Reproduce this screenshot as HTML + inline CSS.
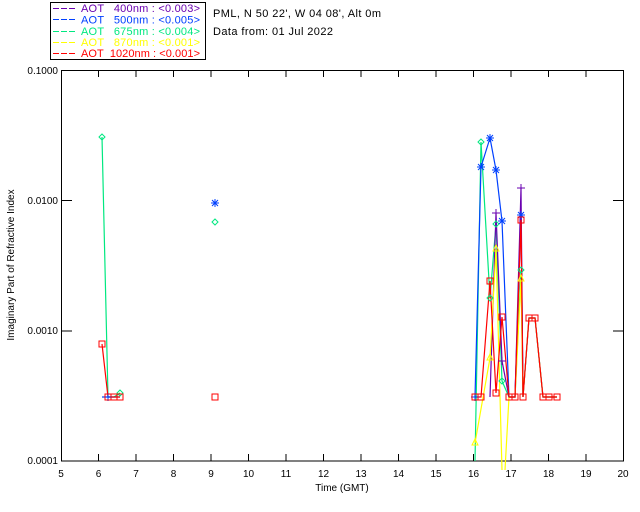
<!DOCTYPE html>
<html><head><meta charset="utf-8"><style>
html,body{margin:0;padding:0;background:#fff;}
svg{display:block;font-family:"Liberation Sans",sans-serif;}
</style></head><body>
<svg width="640" height="512" viewBox="0 0 640 512" xmlns="http://www.w3.org/2000/svg">
<rect width="640" height="512" fill="#fff"/>
<!-- legend -->
<rect x="50.5" y="2.5" width="155" height="57" fill="none" stroke="#000" stroke-width="1"/>
<g stroke-width="1" stroke-dasharray="6,2">
<path d="M53 8.5h22" stroke="#6a00b0"/>
<path d="M53 19.5h22" stroke="#0040ff"/>
<path d="M53 31.5h22" stroke="#00e880"/>
<path d="M53 42.5h22" stroke="#ffff00"/>
<path d="M53 53.5h22" stroke="#ff0000"/>
</g>
<g font-size="11">
<text x="81" y="12" fill="#6a00b0" textLength="119" lengthAdjust="spacing" xml:space="preserve">AOT   400nm : &lt;0.003&gt;</text>
<text x="81" y="23.5" fill="#0040ff" textLength="119" lengthAdjust="spacing" xml:space="preserve">AOT   500nm : &lt;0.005&gt;</text>
<text x="81" y="35" fill="#00e880" textLength="119" lengthAdjust="spacing" xml:space="preserve">AOT   675nm : &lt;0.004&gt;</text>
<text x="81" y="46" fill="#ffff00" textLength="119" lengthAdjust="spacing" xml:space="preserve">AOT   870nm : &lt;0.001&gt;</text>
<text x="81" y="57" fill="#ff0000" textLength="119" lengthAdjust="spacing" xml:space="preserve">AOT  1020nm : &lt;0.001&gt;</text>
<text x="213" y="17" fill="#000" textLength="168" lengthAdjust="spacing">PML, N 50 22', W 04 08', Alt 0m</text>
<text x="213" y="35" fill="#000" textLength="120" lengthAdjust="spacing">Data from: 01 Jul 2022</text>
</g>
<!-- axes -->
<rect x="61.5" y="70.5" width="562" height="390.5" fill="none" stroke="#000" stroke-width="1"/>
<g stroke="#000" stroke-width="1">
<path d="M98.5 70v7M136 70v7M173.5 70v7M211 70v7M248.5 70v7M286 70v7M323.5 70v7M361 70v7M398.5 70v7M436 70v7M473.5 70v7M511 70v7M548.5 70v7M586 70v7"/>
<path d="M98.5 461v-7M136 461v-7M173.5 461v-7M211 461v-7M248.5 461v-7M286 461v-7M323.5 461v-7M361 461v-7M398.5 461v-7M436 461v-7M473.5 461v-7M511 461v-7M548.5 461v-7M586 461v-7"/>
<path d="M61 200.5h11M61 331h11M624 200.5h-11M624 331h-11"/>
</g>
<g font-size="10" fill="#000">
<text x="58" y="74" text-anchor="end">0.1000</text>
<text x="58" y="204" text-anchor="end">0.0100</text>
<text x="58" y="334" text-anchor="end">0.0010</text>
<text x="58" y="464" text-anchor="end">0.0001</text>
<g text-anchor="middle">
<text x="61" y="477">5</text><text x="98.5" y="477">6</text><text x="136" y="477">7</text><text x="173.5" y="477">8</text><text x="211" y="477">9</text><text x="248.5" y="477">10</text><text x="286" y="477">11</text><text x="323.5" y="477">12</text><text x="361" y="477">13</text><text x="398.5" y="477">14</text><text x="436" y="477">15</text><text x="473.5" y="477">16</text><text x="511" y="477">17</text><text x="548.5" y="477">18</text><text x="586" y="477">19</text><text x="623" y="477">20</text>
<text x="342" y="491">Time (GMT)</text>
<text transform="translate(14,265) rotate(-90)">Imaginary Part of Refractive Index</text>
</g>
</g>
<!-- series -->
<g fill="none" stroke-width="1.2">
<polyline stroke="#00e880" points="102,137 108,397 114,397 120,393"/>
<polyline stroke="#00e880" points="475,461 481,142 490,298 496,224 502,381 509,397 515,397 521,270 523,397 529,318 535,318 543,397 549,397 557,397"/>
<polyline stroke="#0040ff" points="102,397 108,397 114,397 120,397"/>
<polyline stroke="#0040ff" points="475,397 481,167 490,138 496,170 502,221 509,397 515,397 521,215 523,397 529,318 535,318 543,397 549,397 557,397"/>
<polyline stroke="#6a00b0" points="490,397 496,213 502,361 509,397 515,397 521,188 523,397"/>
<polyline stroke="#ffff00" points="475,443 490,358 496,249 502,470"/>
<polyline stroke="#ffff00" points="505,470 509,397 515,397 521,279 523,397 529,318 535,318 543,397 549,397 557,397"/>
<polyline stroke="#ff0000" points="102,344 108,397 114,397 120,397"/>
<polyline stroke="#ff0000" points="475,397 481,397 490,281 496,393 502,317 509,397 515,397 521,220 523,397 529,318 535,318 543,397 549,397 557,397"/>
</g>
<!-- markers -->
<g fill="none" stroke-width="1">
<g stroke="#00e880">
<path d="M102 134l3 3-3 3-3-3z M120 390l3 3-3 3-3-3z M215 219l3 3-3 3-3-3z M481 139l3 3-3 3-3-3z M490 295l3 3-3 3-3-3z M496 221l3 3-3 3-3-3z M502 378l3 3-3 3-3-3z M521 267l3 3-3 3-3-3z"/>
</g>
<g stroke="#0040ff">
<path d="M211 203h8M215 199v8M212 200l6 6M218 200l-6 6 M477 167h8M481 163v8M478 164l6 6M484 164l-6 6 M486 138h8M490 134v8M487 135l6 6M493 135l-6 6 M492 170h8M496 166v8M493 167l6 6M499 167l-6 6 M498 221h8M502 217v8M499 218l6 6M505 218l-6 6 M517 215h8M521 211v8M518 212l6 6M524 212l-6 6 M471 397h8M475 393v8 M104 397h8M108 393v8"/>
</g>
<g stroke="#6a00b0">
<path d="M492 213h8M496 209v8 M498 361h8M502 357v8 M517 188h8M521 184v8"/>
</g>
<g stroke="#ffff00">
<path d="M475 439l3 6h-6z M490 354l3 6h-6z M496 245l3 6h-6z M521 275l3 6h-6z"/>
</g>
<g stroke="#ff0000">
<rect x="99" y="341" width="6" height="6"/>
<rect x="105" y="394" width="6" height="6"/><rect x="111" y="394" width="6" height="6"/><rect x="117" y="394" width="6" height="6"/>
<rect x="212" y="394" width="6" height="6"/>
<rect x="472" y="394" width="6" height="6"/><rect x="478" y="394" width="6" height="6"/>
<rect x="487" y="278" width="6" height="6"/><rect x="493" y="390" width="6" height="6"/>
<rect x="499" y="314" width="6" height="6"/><rect x="506" y="394" width="6" height="6"/>
<rect x="512" y="394" width="6" height="6"/><rect x="518" y="217" width="6" height="6"/>
<rect x="520" y="394" width="6" height="6"/><rect x="526" y="315" width="6" height="6"/>
<rect x="532" y="315" width="6" height="6"/><rect x="540" y="394" width="6" height="6"/>
<rect x="546" y="394" width="6" height="6"/><rect x="554" y="394" width="6" height="6"/>
</g>
</g>
</svg>
</body></html>
